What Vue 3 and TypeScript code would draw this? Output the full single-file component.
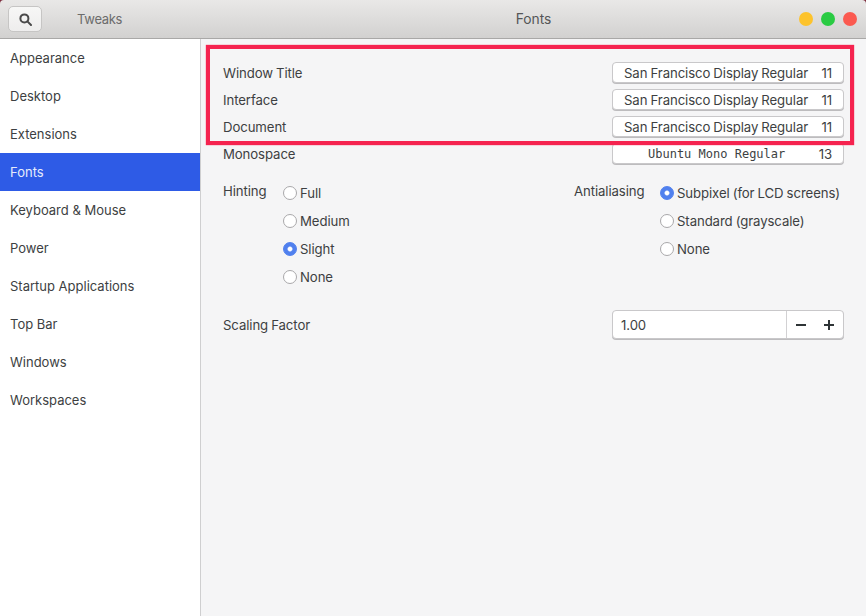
<script setup lang="ts">
const pages: string[] = ['Appearance', 'Desktop', 'Extensions', 'Fonts', 'Keyboard & Mouse', 'Power', 'Startup Applications', 'Top Bar', 'Windows', 'Workspaces']
const fontRows = [
  { label: 'Window Title', font: 'San Francisco Display Regular', size: '11', mono: false },
  { label: 'Interface', font: 'San Francisco Display Regular', size: '11', mono: false },
  { label: 'Document', font: 'San Francisco Display Regular', size: '11', mono: false },
  { label: 'Monospace', font: 'Ubuntu Mono Regular', size: '13', mono: true },
]
const hinting = [
  { label: 'Full', on: false },
  { label: 'Medium', on: false },
  { label: 'Slight', on: true },
  { label: 'None', on: false },
]
const antialiasing = [
  { label: 'Subpixel (for LCD screens)', on: true },
  { label: 'Standard (grayscale)', on: false },
  { label: 'None', on: false },
]
</script>

<template>
  <div class="desktop">
    <div class="window">
      <header class="titlebar">
        <div class="left">
          <button class="search" aria-label="Search">
            <svg width="13" height="13" viewBox="0 0 13 13" fill="none" stroke="#4a4a4a" stroke-width="2">
              <circle cx="5.4" cy="5.4" r="4" />
              <path d="M8.4 8.4 12 12" stroke-linecap="round" />
            </svg>
          </button>
          <span class="app-name">Tweaks</span>
        </div>
        <div class="title">Fonts</div>
        <div class="controls">
          <span class="dot yellow"></span>
          <span class="dot green"></span>
          <span class="dot red"></span>
        </div>
      </header>
      <div class="body">
        <nav class="sidebar">
          <div v-for="p in pages" :key="p" class="nav-item" :class="{ active: p === 'Fonts' }">{{ p }}</div>
        </nav>
        <main class="content">
          <div class="font-rows">
            <div v-for="r in fontRows" :key="r.label" class="font-row">
              <span class="label">{{ r.label }}</span>
              <div class="font-btn" :class="{ mono: r.mono }">
                <span class="font-name">{{ r.font }}</span>
                <span class="font-size">{{ r.size }}</span>
              </div>
            </div>
          </div>
          <div class="options">
            <div class="group">
              <span class="group-label hint-label">Hinting</span>
              <div class="radios">
                <div v-for="o in hinting" :key="o.label" class="radio-row">
                  <span class="radio" :class="{ on: o.on }"></span>
                  <span>{{ o.label }}</span>
                </div>
              </div>
            </div>
            <div class="group aa">
              <span class="group-label aa-label">Antialiasing</span>
              <div class="radios">
                <div v-for="o in antialiasing" :key="o.label" class="radio-row">
                  <span class="radio" :class="{ on: o.on }"></span>
                  <span>{{ o.label }}</span>
                </div>
              </div>
            </div>
          </div>
          <div class="scaling">
            <span class="label">Scaling Factor</span>
            <div class="spin">
              <span class="spin-value">1.00</span>
              <div class="spin-btns">
                <svg width="12" height="12" viewBox="0 0 12 12"><path d="M1 6h10" stroke="#2e3436" stroke-width="2" /></svg>
                <svg width="12" height="12" viewBox="0 0 12 12"><path d="M1 6h10M6 1v10" stroke="#2e3436" stroke-width="2" /></svg>
              </div>
            </div>
          </div>
          <div class="highlight"></div>
        </main>
      </div>
    </div>
  </div>
</template>

<style>
html, body { margin: 0; padding: 0; }
</style>

<style scoped>
.desktop {
  width: 866px;
  height: 616px;
  background: #7c2b3c;
  overflow: hidden;
  font-family: Inter, "Noto Sans", sans-serif;
  font-size: 13px;
  color: #3d3f42;
}
.window {
  height: 100%;
  display: flex;
  flex-direction: column;
  border-radius: 4px 4px 0 0;
  overflow: hidden;
}
.titlebar {
  height: 39px;
  box-sizing: border-box;
  flex: none;
  display: grid;
  grid-template-columns: 201px 1fr;
  align-items: center;
  background: linear-gradient(#e9e8e7, #d2d1d0);
  border-bottom: 1px solid #a9a8a7;
}
.left {
  display: flex;
  align-items: center;
  padding-left: 8px;
}
.search {
  width: 34px;
  height: 26px;
  padding: 0;
  display: flex;
  align-items: center;
  justify-content: center;
  background: linear-gradient(#f7f7f6, #eeeded);
  border: 1px solid #c6c5c4;
  border-radius: 5px;
}
.app-name {
  margin-left: 35px;
  color: #6c6c6c;
  letter-spacing: -0.3px;
}
.title {
  grid-column: 2;
  grid-row: 1;
  color: #555657;
  text-align: center;
  font-size: 13.8px;
}
.controls {
  grid-column: 2;
  grid-row: 1;
  display: flex;
  justify-content: flex-end;
  gap: 8px;
  padding-right: 9px;
}
.dot {
  width: 14px;
  height: 14px;
  border-radius: 50%;
}
.yellow { background: #fdc32c; }
.green { background: #2acb43; }
.red { background: #fb5a50; }
.body {
  flex: 1;
  display: flex;
  min-height: 0;
}
.sidebar {
  width: 201px;
  box-sizing: border-box;
  flex: none;
  background: #fff;
  border-right: 1px solid #cfcfd0;
}
.nav-item {
  height: 38px;
  display: flex;
  align-items: center;
  padding-left: 10px;
  padding-bottom: 1px;
  box-sizing: border-box;
}
.nav-item.active {
  background: #2e5be6;
  color: #e6ecfb;
}
.content {
  flex: 1;
  position: relative;
  background: #f5f5f6;
  padding: 23px 22px 0 22px;
  font-size: 13.2px;
  letter-spacing: -0.1px;
  word-spacing: -0.5px;
}
.font-rows {
  display: flex;
  flex-direction: column;
  gap: 6px;
}
.font-row {
  display: flex;
  align-items: center;
  justify-content: space-between;
  height: 21px;
}
.font-btn {
  width: 232px;
  height: 21px;
  box-sizing: border-box;
  display: flex;
  align-items: center;
  justify-content: space-between;
  padding: 0 11px 0 11px;
  background: #fff;
  border: 1px solid #c9c8ca;
  border-radius: 4px;
  box-shadow: 0 1px 0 #bdbcbe;
  white-space: nowrap;
}
.font-btn.mono .font-name {
  font-family: "DejaVu Sans Mono", "Liberation Mono", monospace;
  font-size: 12px;
  letter-spacing: 0;
  word-spacing: 0;
  margin-left: 24px;
}
.options {
  display: flex;
  justify-content: space-between;
  margin-top: 15px;
}
.group {
  display: flex;
}
.group-label {
  margin-top: 4px;
  flex: none;
}
.hint-label { width: 60px; }
.aa-label { width: 86px; }
.radios {
  display: flex;
  flex-direction: column;
}
.radio-row {
  height: 28px;
  display: flex;
  align-items: center;
  gap: 3px;
  white-space: nowrap;
}
.aa {
  width: 270px;
}
.radio {
  width: 14px;
  height: 14px;
  box-sizing: border-box;
  background: #fff;
  border: 1px solid #a9a8aa;
  border-radius: 50%;
  flex: none;
}
.radio.on {
  background: radial-gradient(circle, #fff 0 1.8px, #5080ee 3px);
  border-color: #5080ee;
}
.scaling {
  display: flex;
  align-items: center;
  justify-content: space-between;
  margin-top: 19px;
}
.spin {
  width: 232px;
  height: 29px;
  box-sizing: border-box;
  display: flex;
  background: #fff;
  border: 1px solid #c9c8ca;
  border-radius: 4px;
  box-shadow: 0 1px 0 #bdbcbe;
}
.spin-value {
  width: 174px;
  box-sizing: border-box;
  padding-left: 8px;
  display: flex;
  align-items: center;
  border-right: 1px solid #d2d1d3;
}
.spin-btns {
  flex: 1;
  display: flex;
  align-items: center;
  justify-content: space-between;
  padding: 0 8px;
}
.highlight {
  position: absolute;
  left: 5px;
  top: 6px;
  width: 648px;
  height: 100px;
  box-sizing: border-box;
  border: 4px solid #f5234f;
  box-shadow: 0 0 1px #f5234f;
  pointer-events: none;
}
</style>
